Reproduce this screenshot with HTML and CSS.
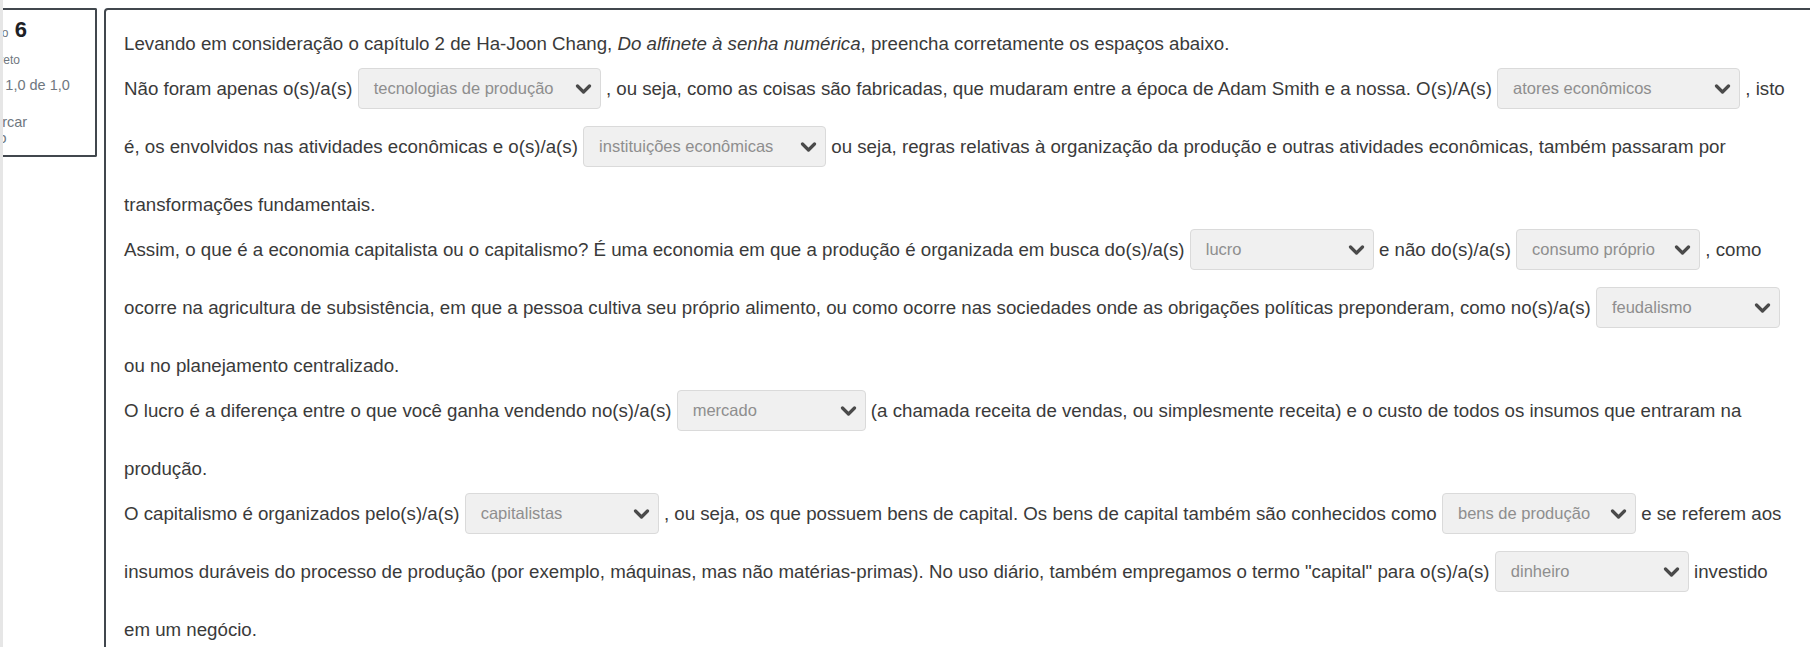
FILE: index.html
```html
<!DOCTYPE html>
<html lang="pt-BR">
<head>
<meta charset="utf-8">
<title>Questão 6</title>
<link rel="stylesheet" href="styles.css">
</head>
<body>
<div class="page">
  <div class="strip"></div>
  <aside class="info-clip">
    <div class="info">
      <h3 class="qno">Questão <span class="num">6</span></h3>
      <div class="state">Correto</div>
      <div class="grade">Atingiu 1,0 de 1,0</div>
      <div class="flag">Marcar<br>questão</div>
    </div>
  </aside>
  <main class="content">
    <div class="qtext">
      <p>Levando em consideração o capítulo 2 de Ha-Joon Chang, <em>Do alfinete à senha numérica</em>, preencha corretamente os espaços abaixo.</p>
      <p>Não foram apenas o(s)/a(s) <span class="gap w-a"><span>tecnologias de produção</span><svg class="chev" viewBox="0 0 16 10"><polyline points="2,2 8,8 14,2"/></svg></span> , ou seja, como as coisas são fabricadas, que mudaram entre a época de Adam Smith e a nossa. O(s)/A(s) <span class="gap w-a"><span>atores econômicos</span><svg class="chev" viewBox="0 0 16 10"><polyline points="2,2 8,8 14,2"/></svg></span> , isto<br>é, os envolvidos nas atividades econômicas e o(s)/a(s) <span class="gap w-a"><span>instituições econômicas</span><svg class="chev" viewBox="0 0 16 10"><polyline points="2,2 8,8 14,2"/></svg></span> ou seja, regras relativas à organização da produção e outras atividades econômicas, também passaram por<br>transformações fundamentais.</p>
      <p>Assim, o que é a economia capitalista ou o capitalismo? É uma economia em que a produção é organizada em busca do(s)/a(s) <span class="gap w-b"><span>lucro</span><svg class="chev" viewBox="0 0 16 10"><polyline points="2,2 8,8 14,2"/></svg></span> e não do(s)/a(s) <span class="gap w-b"><span>consumo próprio</span><svg class="chev" viewBox="0 0 16 10"><polyline points="2,2 8,8 14,2"/></svg></span> , como<br>ocorre na agricultura de subsistência, em que a pessoa cultiva seu próprio alimento, ou como ocorre nas sociedades onde as obrigações políticas preponderam, como no(s)/a(s) <span class="gap w-b"><span>feudalismo</span><svg class="chev" viewBox="0 0 16 10"><polyline points="2,2 8,8 14,2"/></svg></span><br>ou no planejamento centralizado.</p>
      <p>O lucro é a diferença entre o que você ganha vendendo no(s)/a(s) <span class="gap w-m"><span>mercado</span><svg class="chev" viewBox="0 0 16 10"><polyline points="2,2 8,8 14,2"/></svg></span> (a chamada receita de vendas, ou simplesmente receita) e o custo de todos os insumos que entraram na<br>produção.</p>
      <p>O capitalismo é organizados pelo(s)/a(s) <span class="gap w-c"><span>capitalistas</span><svg class="chev" viewBox="0 0 16 10"><polyline points="2,2 8,8 14,2"/></svg></span> , ou seja, os que possuem bens de capital. Os bens de capital também são conhecidos como <span class="gap w-c"><span>bens de produção</span><svg class="chev" viewBox="0 0 16 10"><polyline points="2,2 8,8 14,2"/></svg></span> e se referem aos<br>insumos duráveis do processo de produção (por exemplo, máquinas, mas não matérias-primas). No uso diário, também empregamos o termo "capital" para o(s)/a(s) <span class="gap w-c"><span>dinheiro</span><svg class="chev" viewBox="0 0 16 10"><polyline points="2,2 8,8 14,2"/></svg></span> investido<br>em um negócio.</p>
    </div>
  </main>
</div>
</body>
</html>
```
FILE: styles.css
```css
html, body {
  margin: 0;
  padding: 0;
  background: #ffffff;
}

body {
  width: 1810px;
  height: 647px;
  overflow: hidden;
  font-family: "Liberation Sans", Arial, sans-serif;
  color: #3a3a3a;
}

.page {
  display: flex;
  align-items: flex-start;
  height: 647px;
}

.strip {
  flex: none;
  width: 3px;
  height: 647px;
  background: #e6e6e6;
}

.info-clip {
  flex: none;
  width: 94px;
  height: 149px;
  margin-top: 8px;
  overflow: hidden;
}

.info {
  box-sizing: border-box;
  height: 149px;
  border: 2px solid #41474d;
  border-left: none;
  border-radius: 0 2px 2px 0;
  padding-top: 8px;
  color: #6f7780;
}

.qno {
  margin: 0 0 0 -40px;
  font-weight: normal;
  font-size: 12px;
  line-height: 24px;
  white-space: nowrap;
  color: #6f7780;
}

.qno .num {
  margin-left: 3px;
  font-size: 22px;
  font-weight: bold;
  color: #1d2125;
}

.state {
  margin: 6px 0 0 -23px;
  font-size: 12px;
  line-height: 18px;
  white-space: nowrap;
}

.grade {
  margin: 7px 0 0 -46px;
  font-size: 14.5px;
  line-height: 18px;
  white-space: nowrap;
}

.flag {
  margin: 20px 0 0 -48px;
  font-size: 14.5px;
  line-height: 16px;
  text-indent: 27px;
  white-space: nowrap;
}

.content {
  flex: 1;
  box-sizing: border-box;
  height: 700px;
  margin: 8px -30px 0 7px;
  border: 2px solid #41474d;
  border-top-left-radius: 4px;
  padding: 11px 0 0 18px;
}

.qtext p {
  margin: 0;
  font-size: 18.7px;
  line-height: 45px;
  white-space: nowrap;
  color: #3a3a3a;
}

.qtext em {
  font-style: italic;
}

.gap {
  display: inline-flex;
  align-items: center;
  justify-content: space-between;
  box-sizing: border-box;
  height: 41px;
  margin: 2px 0 15px;
  padding: 0 8px 0 15px;
  vertical-align: top;
  background: #f0f0f0;
  border: 1px solid #dadada;
  border-radius: 4px;
  font-size: 16.5px;
  line-height: 1;
  color: #8e8e8e;
}

.w-a { width: 243px; }
.w-b { width: 184px; }
.w-m { width: 189px; }
.w-c { width: 194px; }

.chev {
  width: 17px;
  height: 10px;
  flex: none;
}

.chev polyline {
  fill: none;
  stroke: #4a4a4a;
  stroke-width: 3.2;
  stroke-linecap: round;
  stroke-linejoin: round;
}
```
